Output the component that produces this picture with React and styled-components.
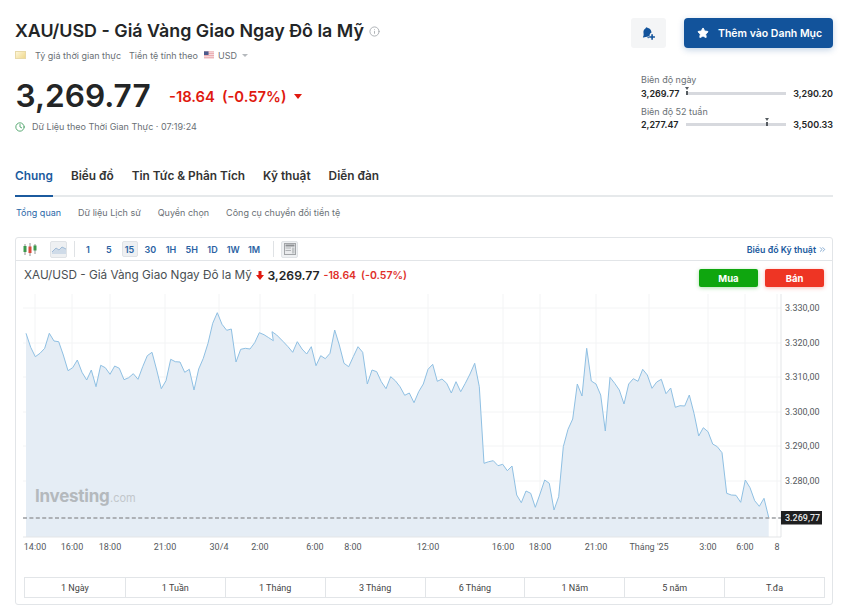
import React from "react";
import styled, { createGlobalStyle } from "styled-components";
import { Star, Clock, Info, ChevronsRight } from "lucide-react";

const GlobalStyle = createGlobalStyle`
  html, body {
    margin: 0;
    padding: 0;
    background: #fff;
    font-family: Inter, "Liberation Sans", sans-serif;
    color: #232526;
  }
  * { box-sizing: border-box; }
`;

const Page = styled.div`
  width: 842px;
  height: 615px;
  overflow: hidden;
  padding: 18px 9px 0 15px;
`;

const Top = styled.div`
  display: flex;
  justify-content: space-between;
  height: 130px;
`;

const TopLeft = styled.div`
  display: flex;
  flex-direction: column;
`;

const TitleRow = styled.div`
  display: flex;
  align-items: center;
  gap: 5px;
  height: 24px;
  margin-top: 1px;
`;

const Title = styled.h1`
  margin: 0;
  font-size: 17.85px;
  font-weight: 600;
  line-height: 24px;
  white-space: nowrap;
`;

const MetaRow = styled.div`
  display: flex;
  align-items: center;
  margin-top: 5px;
  height: 14px;
  font-size: 9px;
  color: #6a7075;
`;

const GoldBar = styled.span`
  width: 11px;
  height: 8px;
  margin-right: 9px;
  background: linear-gradient(135deg, #fdf6d8, #f0d98f);
  border: 1px solid #e8d9a8;
`;

const MetaText = styled.span`
  margin-right: ${({ $gap }) => $gap || 0}px;
`;

const Flag = styled.svg`
  width: 10px;
  height: 8px;
  margin-right: 4px;
`;

const Caret = styled.span`
  width: 0;
  height: 0;
  margin-left: 5px;
  border-left: 3px solid transparent;
  border-right: 3px solid transparent;
  border-top: 3px solid #b5b9bd;
`;

const PriceRow = styled.div`
  display: flex;
  align-items: center;
  margin-top: 15px;
  height: 38px;
`;

const Price = styled.div`
  font-size: 31.6px;
  font-weight: 600;
  line-height: 38px;
  width: 154px;
  padding-left: 0.5px;
`;

const Change = styled.div`
  display: flex;
  align-items: center;
  font-size: 14.8px;
  font-weight: 600;
  color: #e0190f;
  padding-top: 1px;
`;

const ChangePct = styled.span`
  margin-left: 7px;
`;

const DownCaret = styled.span`
  width: 0;
  height: 0;
  margin-left: 7px;
  border-left: 4.5px solid transparent;
  border-right: 4.5px solid transparent;
  border-top: 5.5px solid #e0190f;
`;

const TimeRow = styled.div`
  display: flex;
  align-items: center;
  gap: 7px;
  margin-top: 6px;
  font-size: 9px;
  color: #6a7075;
`;

const TopRight = styled.div`
  display: flex;
  flex-direction: column;
  align-items: flex-end;
`;

const Actions = styled.div`
  display: flex;
  gap: 18px;
`;

const BellButton = styled.button`
  display: flex;
  align-items: center;
  justify-content: center;
  width: 35px;
  height: 30px;
  border: 0;
  border-radius: 3px;
  background: #f4f5f6;
  padding: 0;
`;

const WatchButton = styled.button`
  display: flex;
  align-items: center;
  gap: 9px;
  width: 149px;
  height: 30px;
  padding: 0 0 0 13px;
  border: 0;
  border-radius: 4px;
  background: #12539b;
  box-shadow: 0 2px 6px rgba(18, 83, 155, 0.25);
  color: #fff;
  font-family: inherit;
  font-size: 10.5px;
  font-weight: 600;
`;

const Ranges = styled.div`
  display: flex;
  flex-direction: column;
  gap: 5.5px;
  width: 192px;
  margin-top: 26px;
`;

const RangeLabel = styled.div`
  font-size: 9px;
  line-height: 12px;
  color: #6a7075;
`;

const RangeRow = styled.div`
  display: flex;
  align-items: center;
  justify-content: space-between;
  height: 14px;
  font-size: 9px;
  font-weight: 600;
`;

const RangeTrack = styled.div`
  position: relative;
  width: 100px;
  height: 3px;
  background: #d7d9de;
`;

const RangeMark = styled.span`
  position: absolute;
  top: -5px;
  margin-left: -2.5px;
  border-left: 2.5px solid transparent;
  border-right: 2.5px solid transparent;
  border-top: 3px solid #555b60;
  &::after {
    content: "";
    position: absolute;
    left: -1px;
    top: 1px;
    width: 2px;
    height: 4px;
    background: #555b60;
  }
`;

const Tabs = styled.nav`
  display: flex;
  gap: 18px;
  height: 28px;
  margin-top: 21px;
  border-bottom: 2px solid #e6e9eb;
`;

const Tab = styled.div`
  position: relative;
  height: 28px;
  font-size: 11.85px;
  font-weight: 600;
  line-height: 14px;
  color: ${({ $active }) => ($active ? "#1b5a9e" : "#333")};
  ${({ $active }) =>
    $active &&
    `&::after {
      content: "";
      position: absolute;
      left: 0;
      right: 0;
      bottom: 0;
      height: 2px;
      background: #1b5a9e;
    }`}
`;

const SubTabs = styled.div`
  display: flex;
  gap: 17px;
  height: 14px;
  margin-top: 9px;
  padding-left: 1px;
  font-size: 9px;
  line-height: 14px;
  color: #6a7075;
`;

const SubTab = styled.span`
  color: ${({ $active }) => ($active ? "#2a68a8" : "inherit")};
`;

const Card = styled.section`
  width: 818px;
  height: 368px;
  margin-top: 17px;
  border: 1px solid #e2e5e8;
  border-radius: 3px;
`;

const Toolbar = styled.div`
  display: flex;
  align-items: center;
  height: 23px;
  padding: 0 5px 0 6px;
  border-bottom: 1px solid #e2e5e8;
`;

const ToolIcon = styled.span`
  display: flex;
  align-items: center;
  justify-content: center;
  width: ${({ $on }) => ($on ? 17 : 16)}px;
  height: 17px;
  margin-right: ${({ $mr }) => $mr || 0}px;
  border-radius: 2px;
  background: ${({ $on }) => ($on ? "#eef0f2" : "transparent")};
  border: 1px solid ${({ $on }) => ($on ? "#e0e3e6" : "transparent")};
`;

const ToolDivider = styled.span`
  width: 1px;
  height: 16px;
  margin: 0 ${({ $right }) => $right}px 0 ${({ $left }) => $left}px;
  background: #dfe2e5;
`;

const Interval = styled.span`
  display: flex;
  align-items: center;
  justify-content: center;
  width: 16px;
  height: 16px;
  margin-right: 4.75px;
  border-radius: 2px;
  font-size: 9px;
  font-weight: 600;
  color: #2a62a3;
  background: ${({ $on }) => ($on ? "#eef0f2" : "transparent")};
  border: 1px solid ${({ $on }) => ($on ? "#e0e3e6" : "transparent")};
`;

const TechLink = styled.a`
  display: flex;
  align-items: center;
  gap: 2px;
  margin-left: auto;
  font-size: 8.8px;
  font-weight: 600;
  color: #1b5a9e;
`;

const ChartHead = styled.div`
  display: flex;
  justify-content: space-between;
  align-items: flex-start;
  height: 33px;
  padding: 8px 8px 0 8px;
`;

const Quote = styled.div`
  display: flex;
  align-items: center;
  height: 12px;
  font-size: 11.75px;
  color: #4a4f53;
  white-space: nowrap;
`;

const QuoteArrow = styled.svg`
  margin-left: 4px;
`;

const QuotePrice = styled.span`
  margin: 0 4px 0 3.5px;
  font-size: 12.2px;
  font-weight: 600;
  color: #232526;
`;

const QuoteChange = styled.span`
  margin-right: 5px;
  font-size: 10.5px;
  font-weight: 600;
  color: #e0302a;
`;

const TradeButtons = styled.div`
  display: flex;
  gap: 7px;
`;

const TradeButton = styled.div`
  display: flex;
  align-items: center;
  justify-content: center;
  width: 59px;
  height: 18px;
  border-radius: 2px;
  font-size: 9.5px;
  font-weight: 700;
  color: #fff;
  background: ${({ $tone }) => $tone};
  box-shadow: 0 1px 4px ${({ $tone }) => $tone}55;
`;

const ChartBox = styled.div`
  height: 258px;
`;

const ChartSvg = styled.svg`
  display: block;
  width: 816px;
  height: 258px;
  font-family: Roboto, Inter, sans-serif;
`;

const Periods = styled.div`
  display: grid;
  grid-template-columns: repeat(8, 1fr);
  height: 21px;
  margin: 25px 7px 0 8px;
  border: 1px solid #e2e5e8;
`;

const Period = styled.div`
  display: flex;
  align-items: center;
  justify-content: center;
  font-family: Roboto, Inter, sans-serif;
  font-size: 9px;
  color: #444;
  border-left: ${({ $first }) => ($first ? "0" : "1px solid #e2e5e8")};
`;

// points read off the picture, 3x zoomed crops: [crop x origin, crop y origin, coords]
const chartSegments = [
  [10, 290, [48,130,62,172,76,200,90,190,104,175,118,130,132,153,146,155,160,195,174,242,188,233,202,210,216,247,230,270,244,240,258,290,272,226,286,233,300,253,314,228,328,235,342,269,356,263,370,251,384,268,398,230,412,197,426,187,440,240,454,296,468,272,482,208,496,215,510,216,524,247,538,238,552,300,566,237,580,205,594,160,608,100,622,68,636,103,650,121,664,117,678,216,692,178,706,175,720,177,734,158,748,128,762,134,776,143,790,152]],
  [280, 290, [-24,125,-10,135,10,155,24,170,38,187,52,155,66,177,80,192,94,170,108,227,122,197,136,206,150,190,164,120,178,165,192,220,206,230,220,200,234,170,248,187,262,282,276,240,290,245,304,275,318,296,332,260,346,272,360,290,374,316,388,309,402,338,416,305,430,282,444,238,458,223,472,274,486,267,500,280,514,309,528,275,542,305,556,280,570,252,584,220,598,290,612,520,626,515,640,512,654,527,668,523,682,542,696,528,710,615,724,638,738,603,752,610,766,652,780,612,794,570,808,580]],
  [550, 320, [12,570,26,530,40,380,54,328,68,297,82,192,96,228,110,85,124,183,138,192,152,225,166,333,180,172,194,190,208,210,222,252,236,192,250,176,264,184,278,148,292,165,306,205,320,186,334,178,348,221,362,204,376,262,390,257,404,258,418,225,432,280,446,348,460,323,474,335,488,372,502,380,516,398,530,520,544,525,558,526,572,547,586,480,600,503,614,542,628,559,642,535,656,592]],
];

// svg origin on the page
const SVG_X = 16;
const SVG_Y = 294;

const linePoints = chartSegments.flatMap(([ox, oy, coords]) => {
  const out = [];
  for (let i = 0; i < coords.length; i += 2) {
    out.push([ox + coords[i] / 3 - SVG_X, oy + coords[i + 1] / 3 - SVG_Y]);
  }
  return out;
});

const linePath = linePoints.map((p) => `${p[0].toFixed(1)},${p[1].toFixed(1)}`).join(" ");
const BASE_Y = 537 - SVG_Y;
const lastX = linePoints[linePoints.length - 1][0];
const firstX = linePoints[0][0];
const areaPath = `${firstX.toFixed(1)},${BASE_Y} ${linePath} ${lastX.toFixed(1)},${BASE_Y}`;

const yTicks = [
  ["3.330,00", 308],
  ["3.320,00", 343],
  ["3.310,00", 377],
  ["3.300,00", 412],
  ["3.290,00", 446],
  ["3.280,00", 481],
];

const xTicks = [
  ["14:00", 35],
  ["16:00", 72],
  ["18:00", 110],
  ["21:00", 165],
  ["30/4", 219],
  ["2:00", 260],
  ["6:00", 315],
  ["8:00", 353],
  ["12:00", 428],
  ["16:00", 503],
  ["18:00", 540],
  ["21:00", 596],
  ["Tháng '25", 649],
  ["3:00", 708],
  ["6:00", 745],
  ["8", 777],
];

const PriceChart = () => (
  <ChartSvg viewBox="0 0 816 258">
    {yTicks.map(([label, y]) => (
      <line key={label} x1="7" x2="765" y1={y - SVG_Y} y2={y - SVG_Y} stroke="#f3f4f5" />
    ))}
    {xTicks.map(([label, x]) => (
      <line key={label + x} x1={x - SVG_X} x2={x - SVG_X} y1="0" y2={BASE_Y} stroke="#f3f4f5" />
    ))}
    <polygon points={areaPath} fill="#e3ecf4" fillOpacity="0.92" />
    <polyline points={linePath} fill="none" stroke="#8fc0e3" strokeWidth="1" strokeLinejoin="round" />
    <line x1="765" x2="765" y1="0" y2={BASE_Y} stroke="#e3e5e7" />
    <line x1="7" x2="765" y1={BASE_Y} y2={BASE_Y} stroke="#e3e5e7" />
    <line x1="7" x2="765" y1="224" y2="224" stroke="#9a9da1" strokeWidth="1.3" strokeDasharray="4 2.4" />
    <text x="19" y="208" fontFamily="Inter, sans-serif" fontSize="17" fontWeight="700" letterSpacing="-0.25" fill="#b4b9bd">Investing</text>
    <text x="94" y="208" fontFamily="Inter, sans-serif" fontSize="11" fill="#c2c7cb">.com</text>
    {yTicks.map(([label, y]) => (
      <text key={label} x="769" y={y - SVG_Y + 3} fontSize="9" fill="#55595d">{label}</text>
    ))}
    <rect x="765" y="217" width="41" height="13.5" fill="#1e1f20" />
    <text x="769" y="227" fontSize="9" fontWeight="500" fill="#e8e8e8">3.269,77</text>
    {xTicks.map(([label, x]) => (
      <text key={label + x} x={x - SVG_X} y="256" fontSize="9" textAnchor="middle" fill="#55595d">{label}</text>
    ))}
  </ChartSvg>
);

const BellPlus = () => (
  <svg width="15" height="15" viewBox="0 0 14 14" fill="#12539b">
    <g transform="rotate(-12 6 6)">
      <path d="M6 1.2c.6 0 1 .4 1 .9 1.7.4 2.7 1.9 2.7 3.6 0 .5 0 .9.1 1.2-1.3.2-2.4 1.3-2.6 2.9H1.2c-.3 0-.4-.3-.2-.5.9-.9 1.2-1.8 1.3-3.6C2.4 4 3.4 2.5 5 2.1c0-.5.4-.9 1-.9z" />
      <path d="M4.7 10.6h2.1c-.1.6-.5 1-1 1-.6 0-1-.4-1.1-1z" />
    </g>
    <path d="M9.6 7.6h1.5v1.9H13V11h-1.9v1.9H9.6V11H7.7V9.5h1.9z" />
  </svg>
);

const Candles = () => (
  <svg width="14" height="13" viewBox="0 0 14 13">
    <path d="M2 1v11M7 0v13M12 1v10" stroke="#777" strokeWidth="0.8" />
    <rect x="0.5" y="3" width="3" height="6" fill="#3c9a4c" />
    <rect x="5.5" y="3.5" width="3" height="6.5" fill="#d84b3c" />
    <rect x="10.5" y="2.5" width="3" height="5" fill="#3c9a4c" />
  </svg>
);

const AreaIcon = () => (
  <svg width="14" height="10" viewBox="0 0 14 10">
    <path d="M0 8l4-4 3 2 3-3 4 2v5H0z" fill="#cfdbe8" />
    <path d="M0 8l4-4 3 2 3-3 4 2" fill="none" stroke="#8fb0d0" strokeWidth="0.8" />
  </svg>
);

const LayoutIcon = () => (
  <svg width="12" height="12" viewBox="0 0 12 12">
    <rect x="0.5" y="0.5" width="11" height="11" fill="#e9eaec" stroke="#a2a5a8" />
    <rect x="1.5" y="1.5" width="9" height="2" fill="#8d9093" />
    <rect x="1.5" y="4.5" width="5.5" height="1" fill="#b0b3b6" />
    <rect x="8" y="4.5" width="2.5" height="6" fill="#c2c5c7" />
    <rect x="1.5" y="7" width="5.5" height="1" fill="#b0b3b6" />
  </svg>
);

const intervals = ["1", "5", "15", "30", "1H", "5H", "1D", "1W", "1M"];
const periods = ["1 Ngày", "1 Tuần", "1 Tháng", "3 Tháng", "6 Tháng", "1 Năm", "5 năm", "T.đa"];
const tabs = ["Chung", "Biểu đồ", "Tin Tức & Phân Tích", "Kỹ thuật", "Diễn đàn"];
const subTabs = ["Tổng quan", "Dữ liệu Lịch sử", "Quyền chọn", "Công cụ chuyển đổi tiền tệ"];

const App = () => (
  <Page>
    <GlobalStyle />
    <Top>
      <TopLeft>
        <TitleRow>
          <Title>XAU/USD - Giá Vàng Giao Ngay Đô la Mỹ</Title>
          <Info size={11} color="#a9adb1" />
        </TitleRow>
        <MetaRow>
          <GoldBar />
          <MetaText $gap={8}>Tỷ giá thời gian thực</MetaText>
          <MetaText $gap={6}>Tiền tệ tính theo</MetaText>
          <Flag viewBox="0 0 11 8">
            <rect width="11" height="8" fill="#e8a3a8" />
            <path d="M0 1.5h11M0 3.5h11M0 5.5h11M0 7.5h11" stroke="#fff" strokeWidth="0.7" />
            <rect width="5" height="4" fill="#4a5a8c" />
          </Flag>
          <MetaText>USD</MetaText>
          <Caret />
        </MetaRow>
        <PriceRow>
          <Price>3,269.77</Price>
          <Change>
            -18.64
            <ChangePct>(-0.57%)</ChangePct>
            <DownCaret />
          </Change>
        </PriceRow>
        <TimeRow>
          <Clock size={10} color="#3c9a5c" />
          <span>Dữ Liệu theo Thời Gian Thực · 07:19:24</span>
        </TimeRow>
      </TopLeft>
      <TopRight>
        <Actions>
          <BellButton>
            <BellPlus />
          </BellButton>
          <WatchButton>
            <Star size={12} fill="#fff" color="#fff" />
            Thêm vào Danh Mục
          </WatchButton>
        </Actions>
        <Ranges>
          <div>
            <RangeLabel>Biên độ ngày</RangeLabel>
            <RangeRow>
              3,269.77
              <RangeTrack>
                <RangeMark style={{ left: "1%" }} />
              </RangeTrack>
              3,290.20
            </RangeRow>
          </div>
          <div>
            <RangeLabel>Biên độ 52 tuần</RangeLabel>
            <RangeRow>
              2,277.47
              <RangeTrack>
                <RangeMark style={{ left: "82%" }} />
              </RangeTrack>
              3,500.33
            </RangeRow>
          </div>
        </Ranges>
      </TopRight>
    </Top>
    <Tabs>
      {tabs.map((t, i) => (
        <Tab key={t} $active={i === 0}>{t}</Tab>
      ))}
    </Tabs>
    <SubTabs>
      {subTabs.map((t, i) => (
        <SubTab key={t} $active={i === 0}>{t}</SubTab>
      ))}
    </SubTabs>
    <Card>
      <Toolbar>
        <ToolIcon $mr={12}><Candles /></ToolIcon>
        <ToolIcon $on><AreaIcon /></ToolIcon>
        <ToolDivider $left={7} $right={5} />
        {intervals.map((t) => (
          <Interval key={t} $on={t === "15"}>{t}</Interval>
        ))}
        <ToolDivider $left={5.75} $right={7.5} />
        <ToolIcon $on><LayoutIcon /></ToolIcon>
        <TechLink>
          Biểu đồ Kỹ thuật
          <ChevronsRight size={9} color="#5f8fc2" />
        </TechLink>
      </Toolbar>
      <ChartHead>
        <Quote>
          XAU/USD - Giá Vàng Giao Ngay Đô la Mỹ
          <QuoteArrow width="8" height="9" viewBox="0 0 8 9" fill="#e0190f">
            <path d="M2.5 0h3v4H8L4 9 0 4h2.5z" />
          </QuoteArrow>
          <QuotePrice>3,269.77</QuotePrice>
          <QuoteChange>-18.64</QuoteChange>
          <QuoteChange>(-0.57%)</QuoteChange>
        </Quote>
        <TradeButtons>
          <TradeButton $tone="#0fa60f">Mua</TradeButton>
          <TradeButton $tone="#ee3524">Bán</TradeButton>
        </TradeButtons>
      </ChartHead>
      <ChartBox>
        <PriceChart />
      </ChartBox>
      <Periods>
        {periods.map((p, i) => (
          <Period key={p} $first={i === 0}>{p}</Period>
        ))}
      </Periods>
    </Card>
  </Page>
);

export default App;
